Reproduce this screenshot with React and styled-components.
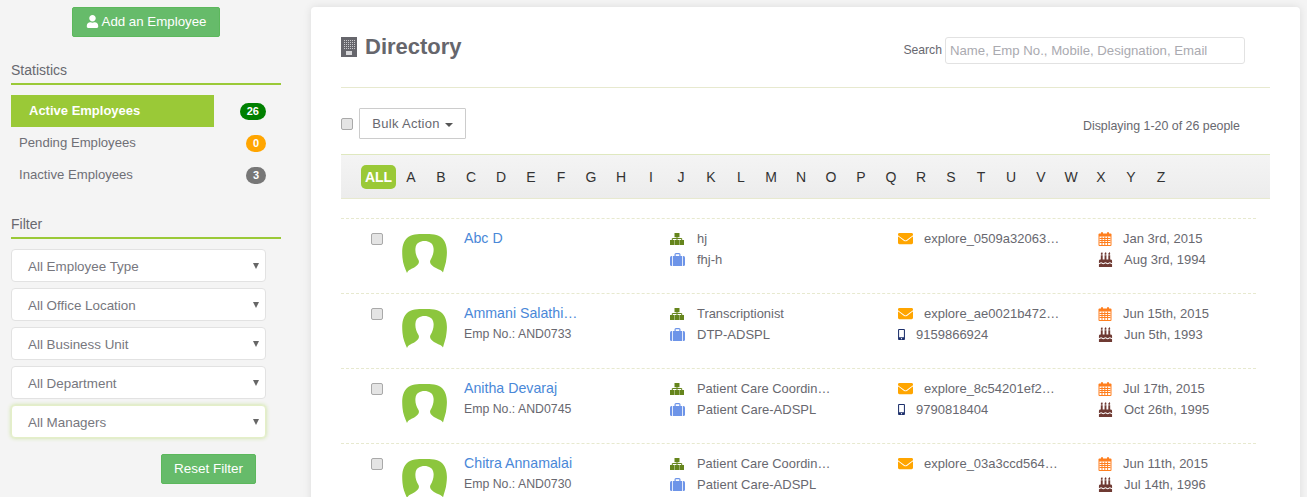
import React from "react";
import styled, { createGlobalStyle } from "styled-components";
import { FaUser, FaEnvelope, FaMobileAlt, FaBirthdayCake } from "react-icons/fa";

const LETTERS = "ABCDEFGHIJKLMNOPQRSTUVWXYZ".split("");

const PEOPLE = [
  { name: "Abc D", emp: "", role: "hj", unit: "fhj-h", email: "explore_0509a32063…", mobile: "", joined: "Jan 3rd, 2015", born: "Aug 3rd, 1994" },
  { name: "Ammani Salathi…", emp: "AND0733", role: "Transcriptionist", unit: "DTP-ADSPL", email: "explore_ae0021b472…", mobile: "9159866924", joined: "Jun 15th, 2015", born: "Jun 5th, 1993" },
  { name: "Anitha Devaraj", emp: "AND0745", role: "Patient Care Coordin…", unit: "Patient Care-ADSPL", email: "explore_8c54201ef2…", mobile: "9790818404", joined: "Jul 17th, 2015", born: "Oct 26th, 1995" },
  { name: "Chitra Annamalai", emp: "AND0730", role: "Patient Care Coordin…", unit: "Patient Care-ADSPL", email: "explore_03a3ccd564…", mobile: "", joined: "Jun 11th, 2015", born: "Jul 14th, 1996" },
];

const FILTERS = ["All Employee Type", "All Office Location", "All Business Unit", "All Department", "All Managers"];

const STATS = [
  { label: "Active Employees", count: 26, color: "#008000", active: true },
  { label: "Pending Employees", count: 0, color: "#ffa500" },
  { label: "Inactive Employees", count: 3, color: "#777777" },
];

function BuildingIcon() {
  const windows = [];
  for (let y = 3; y < 13; y += 2) {
    for (let x = 3; x < 14; x += 2) {
      windows.push(<rect key={x + "-" + y} x={x} y={y} width="1" height="1" fill="#c9c9cc" />);
    }
  }
  return (
    <svg width="16" height="20" viewBox="0 0 16 20">
      <rect x="0" y="0" width="16" height="20" fill="#66666c" />
      {windows}
      <rect x="5" y="14" width="6" height="4" fill="#d8d8da" />
    </svg>
  );
}

function SitemapIcon() {
  return (
    <svg width="14" height="12" viewBox="0 0 14 12">
      <path d="M7 4v3M2.300 7.500V5.500h9.400v2" stroke="#65851c" strokeWidth="1" fill="none" />
      <rect x="4.500" y="0" width="5" height="4.200" fill="#65851c" />
      <rect x="0" y="7" width="4.500" height="5" fill="#65851c" />
      <rect x="4.800" y="7" width="4.500" height="5" fill="#65851c" />
      <rect x="9.500" y="7" width="4.500" height="5" fill="#65851c" />
    </svg>
  );
}

function BriefcaseIcon() {
  return (
    <svg width="15" height="13" viewBox="0 0 15 13">
      <path d="M4.500 3V1.500A1.500 1.500 0 0 1 6 0h3a1.500 1.500 0 0 1 1.500 1.500V3H9.300V1.300H5.700V3z" fill="#6d94e8" />
      <rect x="0" y="3" width="15" height="10" rx="1.500" fill="#6d94e8" />
      <path d="M2.500 3v10M12.500 3v10" stroke="#fff" strokeWidth="0.8" />
    </svg>
  );
}

function CalendarIcon() {
  return (
    <svg width="14" height="14" viewBox="0 0 14 14">
      <rect x="0.500" y="1.500" width="13" height="12.500" rx="1" fill="#ff7f1e" />
      <rect x="3" y="0" width="2" height="3" rx="1" fill="#ff7f1e" />
      <rect x="9" y="0" width="2" height="3" rx="1" fill="#ff7f1e" />
      <path d="M1.500 4.500h11v8.500h-11z" fill="#fff" />
      <path d="M1.500 6.500h11M1.500 8.500h11M1.500 10.500h11M4 4.500v8.500M6.800 4.500v8.500M9.600 4.500v8.500" stroke="#ff7f1e" strokeWidth="1" />
    </svg>
  );
}

function Avatar() {
  return (
    <svg width="45" height="39" viewBox="0 0 45 39">
      <path
        d="M5 39C3 34 1 30 0.500 24C-0.200 16 0 9 5 4C9 0 16 0 22 0C29 0 36 0 40 4C45 9 45.500 17 44.500 24C44 30 42 34 41 38.500C40 36 36 35.500 32 33C28 30.500 27.500 28 28.500 26C31 22 32 17 31.500 14C31 9 27 7 22.500 7C18 7 14 9 13.500 14C13 18 14 22 16.500 26C17.500 28 17 30.500 13 33C10 35 6.500 35.500 5 39Z"
        fill="#8cc63e"
      />
    </svg>
  );
}

export default function App() {
  return (
    <>
      <GlobalStyle />
      <Page>
        <Sidebar>
          <AddRow>
            <GreenButton>
              <FaUser size={13} /> Add an Employee
            </GreenButton>
          </AddRow>

          <SectionTitle>Statistics</SectionTitle>
          <StatList>
            {STATS.map((s) => (
              <StatRow key={s.label}>
                <StatLabel $active={s.active}>{s.label}</StatLabel>
                <Badge $color={s.color}>{s.count}</Badge>
              </StatRow>
            ))}
          </StatList>

          <FilterTitle>Filter</FilterTitle>
          <FilterList>
            {FILTERS.map((f) => (
              <SelectBox key={f} $focus={f === "All Managers"}>
                {f}
                <Caret />
              </SelectBox>
            ))}
          </FilterList>
          <ResetRow>
            <ResetButton>Reset Filter</ResetButton>
          </ResetRow>
        </Sidebar>

        <Panel>
          <PanelHead>
            <Title>
              <BuildingIcon />
              Directory
            </Title>
            <SearchWrap>
              <SearchLabel>Search</SearchLabel>
              <SearchInput placeholder="Name, Emp No., Mobile, Designation, Email" />
            </SearchWrap>
          </PanelHead>

          <BulkRow>
            <BulkLeft>
              <Check />
              <BulkButton>
                Bulk Action <SmallCaret />
              </BulkButton>
            </BulkLeft>
            <Count>Displaying 1-20 of 26 people</Count>
          </BulkRow>

          <AlphaBar>
            <AllPill>ALL</AllPill>
            {LETTERS.map((l) => (
              <Letter key={l}>{l}</Letter>
            ))}
          </AlphaBar>

          <People>
            {PEOPLE.map((p) => (
              <Person key={p.name}>
                <CheckCell>
                  <Check />
                </CheckCell>
                <AvatarCell>
                  <Avatar />
                </AvatarCell>
                <div>
                  <Name>{p.name}</Name>
                  {p.emp && <EmpNo>Emp No.: {p.emp}</EmpNo>}
                </div>
                <div>
                  <Line $size="12.900px">
                    <IconSlot><SitemapIcon /></IconSlot>
                    {p.role}
                  </Line>
                  <Line>
                    <IconSlot><BriefcaseIcon /></IconSlot>
                    {p.unit}
                  </Line>
                </div>
                <div>
                  <Line>
                    <IconSlot $width="26px" $color="#ffa500"><FaEnvelope size={15} /></IconSlot>
                    {p.email}
                  </Line>
                  {p.mobile && (
                    <Line>
                      <MobileSlot><FaMobileAlt size={11} /></MobileSlot>
                      {p.mobile}
                    </Line>
                  )}
                </div>
                <div>
                  <Line>
                    <IconSlot $width="25px"><CalendarIcon /></IconSlot>
                    {p.joined}
                  </Line>
                  <Line>
                    <IconSlot $width="26px" $color="#6f3a33"><FaBirthdayCake size={15} /></IconSlot>
                    {p.born}
                  </Line>
                </div>
              </Person>
            ))}
          </People>
        </Panel>
      </Page>
    </>
  );
}

const GlobalStyle = createGlobalStyle`
  html, body {
    margin: 0;
    height: 497px;
    overflow: hidden;
    background: #f4f4f4;
    font-family: "Liberation Sans", Arial, sans-serif;
    color: #68686f;
  }
  * {
    box-sizing: border-box;
  }
`;

const Page = styled.div`
  display: flex;
  align-items: flex-start;
  padding: 7px 7px 0 11px;
  gap: 30px;
  height: 497px;
  overflow: hidden;
`;

const Sidebar = styled.aside`
  width: 270px;
  flex: none;
`;

const AddRow = styled.div`
  display: flex;
  justify-content: flex-start;
  padding-left: 61px;
`;

const GreenButton = styled.button`
  width: 148px;
  height: 30px;
  padding: 0 0 2px;
  border: 1px solid #5cb85c;
  border-radius: 2px;
  background: #66bb6a;
  color: #fff;
  font: 13.300px "Liberation Sans", Arial, sans-serif;
  display: flex;
  align-items: center;
  justify-content: center;
  gap: 3px;
`;

const SectionTitle = styled.div`
  margin-top: 25px;
  height: 23px;
  font-size: 14px;
  line-height: 16px;
  border-bottom: 2px solid #9ac937;
`;

const StatList = styled.div`
  margin-top: 10px;
`;

const StatRow = styled.div`
  width: 255px;
  height: 32px;
  display: flex;
  align-items: center;
  justify-content: space-between;
`;

const StatLabel = styled.div`
  height: 32px;
  line-height: 31px;
  width: 203px;
  font-size: ${({ $active }) => ($active ? "13px" : "13.150px")};
  padding-left: ${({ $active }) => ($active ? "18px" : "8px")};
  font-weight: ${({ $active }) => ($active ? 700 : 400)};
  background: ${({ $active }) => ($active ? "#9ac937" : "transparent")};
  color: ${({ $active }) => ($active ? "#fff" : "#6f6f76")};
`;

const Badge = styled.span`
  min-width: 20px;
  height: 17px;
  padding: 0 7px;
  border-radius: 9px;
  background: ${({ $color }) => $color};
  color: #fff;
  font-size: 11px;
  font-weight: 700;
  line-height: 17px;
  text-align: center;
`;

const FilterTitle = styled(SectionTitle)`
  margin-top: 25px;
`;

const FilterList = styled.div`
  margin-top: 10px;
  display: flex;
  flex-direction: column;
  gap: 6px;
  width: 255px;
`;

const SelectBox = styled.div`
  position: relative;
  height: 33px;
  padding-left: 16px;
  line-height: 33px;
  font-size: 13.400px;
  color: #77777e;
  background: #fff;
  border: 1px solid ${({ $focus }) => ($focus ? "#e4efc8" : "#e2e2e2")};
  border-radius: 4px;
  box-shadow: ${({ $focus }) => ($focus ? "0 0 4px #c9e39a" : "none")};
`;

const Caret = styled.span`
  position: absolute;
  right: 6px;
  top: 13px;
  border-top: 6px solid #666;
  border-left: 3px solid transparent;
  border-right: 3px solid transparent;
`;

const ResetRow = styled.div`
  display: flex;
  justify-content: flex-end;
  width: 245px;
  margin-top: 16px;
`;

const ResetButton = styled(GreenButton)`
  width: 95px;
  font-size: 13.500px;
`;

const Panel = styled.main`
  flex: none;
  width: 989px;
  height: 520px;
  padding: 0 30px;
  background: #fff;
  border-radius: 4px;
  box-shadow: 0 0 8px rgba(0, 0, 0, 0.1);
`;

const PanelHead = styled.header`
  height: 81px;
  padding: 27px 25px 0 0;
  display: flex;
  justify-content: space-between;
  align-items: flex-start;
  border-bottom: 1px solid #e7e9cf;
`;

const Title = styled.h1`
  margin: 0;
  display: flex;
  align-items: center;
  gap: 8px;
  height: 26px;
  font-size: 22px;
  line-height: 26px;
  font-weight: 700;
  color: #66666c;
`;

const SearchWrap = styled.div`
  display: flex;
  align-items: center;
  gap: 3px;
  margin-top: 3px;
`;

const SearchLabel = styled.label`
  font-size: 12.200px;
  position: relative;
  top: -1px;
`;

const SearchInput = styled.input`
  width: 300px;
  height: 27px;
  padding: 0 4px;
  border: 1px solid #e2e2e2;
  border-radius: 3px;
  font: 13.200px "Liberation Sans", Arial, sans-serif;
  &::placeholder {
    color: #aaaab0;
    opacity: 1;
  }
`;

const BulkRow = styled.div`
  height: 66px;
  padding: 20px 30px 0 0;
  display: flex;
  justify-content: space-between;
  align-items: flex-start;
`;

const BulkLeft = styled.div`
  display: flex;
  align-items: center;
  gap: 6px;
`;

const Check = styled.span`
  display: block;
  width: 12px;
  height: 12px;
  border: 1px solid #a9a9a9;
  border-radius: 2px;
  background: #e4e4e4;
`;

const BulkButton = styled.button`
  height: 31px;
  width: 107px;
  padding: 0;
  border: 1px solid #ccc;
  border-radius: 1px;
  background: #fff;
  color: #68686f;
  font: 13px "Liberation Sans", Arial, sans-serif;
  letter-spacing: 0.3px;
`;

const SmallCaret = styled.span`
  display: inline-block;
  margin-left: 1px;
  vertical-align: middle;
  border-top: 4px solid #555;
  border-left: 4px solid transparent;
  border-right: 4px solid transparent;
`;

const Count = styled.div`
  margin-top: 11px;
  font-size: 12.400px;
  line-height: 14px;
`;

const AlphaBar = styled.nav`
  height: 45px;
  padding-left: 20px;
  display: flex;
  align-items: center;
  background: linear-gradient(#f4f4f4, #ececec);
  border-top: 1px solid #dfe8bf;
  border-bottom: 1px solid #e7e9cf;
`;

const AllPill = styled.span`
  width: 35px;
  height: 24px;
  border-radius: 5px;
  background: #9ac937;
  color: #fff;
  font-size: 14px;
  font-weight: 700;
  line-height: 24px;
  text-align: center;
`;

const Letter = styled.span`
  width: 30px;
  text-align: center;
  font-size: 14px;
  color: #333;
`;

const People = styled.section`
  margin-top: 19px;
  width: 915px;
`;

const Person = styled.article`
  height: 75px;
  padding: 9px 0 0 30px;
  display: grid;
  grid-template-columns: 31px 62px 206px 228px 200px 1fr;
  align-content: start;
  border-top: 1px dashed #e7e9cf;
`;

const CheckCell = styled.div`
  padding-top: 5px;
`;

const AvatarCell = styled.div`
  padding-top: 6px;
`;

const Name = styled.a`
  display: block;
  height: 21px;
  font-size: 14.200px;
  line-height: 20px;
  color: #4a88d8;
`;

const EmpNo = styled.div`
  font-size: 12.300px;
  line-height: 20px;
  color: #68686f;
`;

const Line = styled.div`
  display: flex;
  align-items: center;
  height: 21px;
  font-size: ${({ $size }) => $size || "13px"};
  color: #68686f;
`;

const IconSlot = styled.span`
  display: flex;
  width: ${({ $width }) => $width || "27px"};
  flex: none;
  color: ${({ $color }) => $color || "inherit"};
`;

const MobileSlot = styled.span`
  display: flex;
  width: 20px;
  margin-left: -2px;
  flex: none;
  color: #1c2f6b;
`;
